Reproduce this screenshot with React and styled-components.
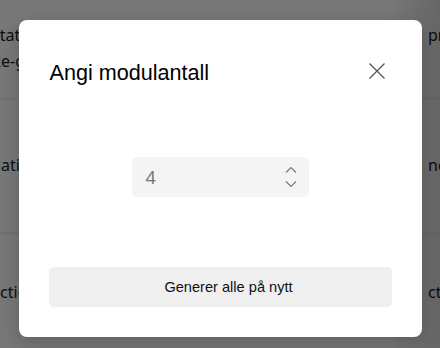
import React from 'react'
import styled, { createGlobalStyle } from 'styled-components'

const Global = createGlobalStyle`
  html, body {
    margin: 0;
    padding: 0;
    width: 440px;
    height: 348px;
    overflow: hidden;
    font-family: "Noto Sans", "Open Sans", sans-serif;
  }
`

const Page = styled.div`
  position: relative;
  width: 440px;
  height: 348px;
  overflow: hidden;
  background: #fff;
  display: grid;
  grid-template-rows: 97px 135px 1fr;
`

const Row = styled.div`
  display: flex;
  justify-content: space-between;
  align-items: flex-start;
  padding-top: ${p => p.$pad}px;
  border-top: ${p => (p.$first ? 'none' : '3px solid #f3f3f3')};
  font-size: 16px;
  line-height: 26px;
  color: #1a1a1a;
`

const LeftCell = styled.div`
  margin-left: ${p => p.$shift}px;
  white-space: nowrap;
`

const RightCell = styled.div`
  margin-right: -40px;
  width: 52px;
  white-space: nowrap;
  overflow: hidden;
`

const Overlay = styled.div`
  position: absolute;
  inset: 0;
  background: linear-gradient(to right, rgba(0, 0, 0, 0.53) 88%, rgba(0, 0, 0, 0.6));
  display: flex;
  align-items: flex-start;
  justify-content: center;
  padding-top: 20px;
  box-sizing: border-box;
`

const Dialog = styled.div`
  width: 403px;
  height: 317px;
  background: #fff;
  border-radius: 8px;
  box-sizing: border-box;
  padding: 36px 30px 30px;
  display: flex;
  flex-direction: column;
  box-shadow: 0 6px 20px rgba(0, 0, 0, 0.2);
`

const Header = styled.div`
  display: flex;
  align-items: center;
  justify-content: space-between;
  height: 30px;
`

const Title = styled.h2`
  margin: 4px 0 0 1px;
  font-family: "Liberation Sans", Arial, sans-serif;
  font-size: 21.6px;
  font-weight: 400;
  color: #000;
`

const CloseButton = styled.button`
  width: 30px;
  height: 30px;
  border: none;
  background: transparent;
  padding: 0;
  display: flex;
  align-items: center;
  justify-content: center;
  color: #555;
`

const Body = styled.div`
  flex: 1;
  display: flex;
  align-items: center;
  justify-content: center;
`

const NumberField = styled.div`
  width: 177px;
  height: 40px;
  background: #f4f4f4;
  border-radius: 5px;
  display: flex;
  align-items: center;
  justify-content: space-between;
  padding: 0 12px 0 14px;
  box-sizing: border-box;
`

const Value = styled.span`
  font-size: 18px;
  color: #767676;
`

const Spinner = styled.div`
  display: flex;
  flex-direction: column;
  gap: 8px;
  color: #777;
`

const WideButton = styled.button`
  width: 100%;
  height: 40px;
  border: none;
  border-radius: 5px;
  background: #efefef;
  padding: 0 0 0 17px;
  font-family: "Liberation Sans", Arial, sans-serif;
  font-size: 14.6px;
  color: #111;
`

const Chevron = ({ up }) => (
  <svg width="12" height="6" viewBox="0 0 12 6" fill="none" stroke="currentColor" strokeWidth="1.1">
    {up ? <path d="M1 5.5 L6 0.5 L11 5.5" /> : <path d="M1 0.5 L6 5.5 L11 0.5" />}
  </svg>
)

const rows = [
  { left: ['Status', 'Re-generer'], right: 'preset', pad: 22, shift: -9 },
  { left: ['Relation'], right: 'ncode', pad: 52, shift: -22 },
  { left: ['Function'], right: 'ction', pad: 44, shift: -28 },
]

export default function App() {
  return (
    <>
      <Global />
      <Page>
        {rows.map((r, i) => (
          <Row key={i} $pad={r.pad} $first={i === 0}>
            <LeftCell $shift={r.shift}>
              {r.left.map(t => (
                <div key={t}>{t}</div>
              ))}
            </LeftCell>
            <RightCell>{r.right}</RightCell>
          </Row>
        ))}
        <Overlay>
          <Dialog role="dialog">
            <Header>
              <Title>Angi modulantall</Title>
              <CloseButton aria-label="Lukk">
                <svg width="16" height="16" viewBox="0 0 16 16" stroke="currentColor" strokeWidth="1.3">
                  <path d="M0.5 0.5 L15.5 15.5 M15.5 0.5 L0.5 15.5" />
                </svg>
              </CloseButton>
            </Header>
            <Body>
              <NumberField>
                <Value>4</Value>
                <Spinner>
                  <Chevron up />
                  <Chevron />
                </Spinner>
              </NumberField>
            </Body>
            <WideButton>Generer alle på nytt</WideButton>
          </Dialog>
        </Overlay>
      </Page>
    </>
  )
}
